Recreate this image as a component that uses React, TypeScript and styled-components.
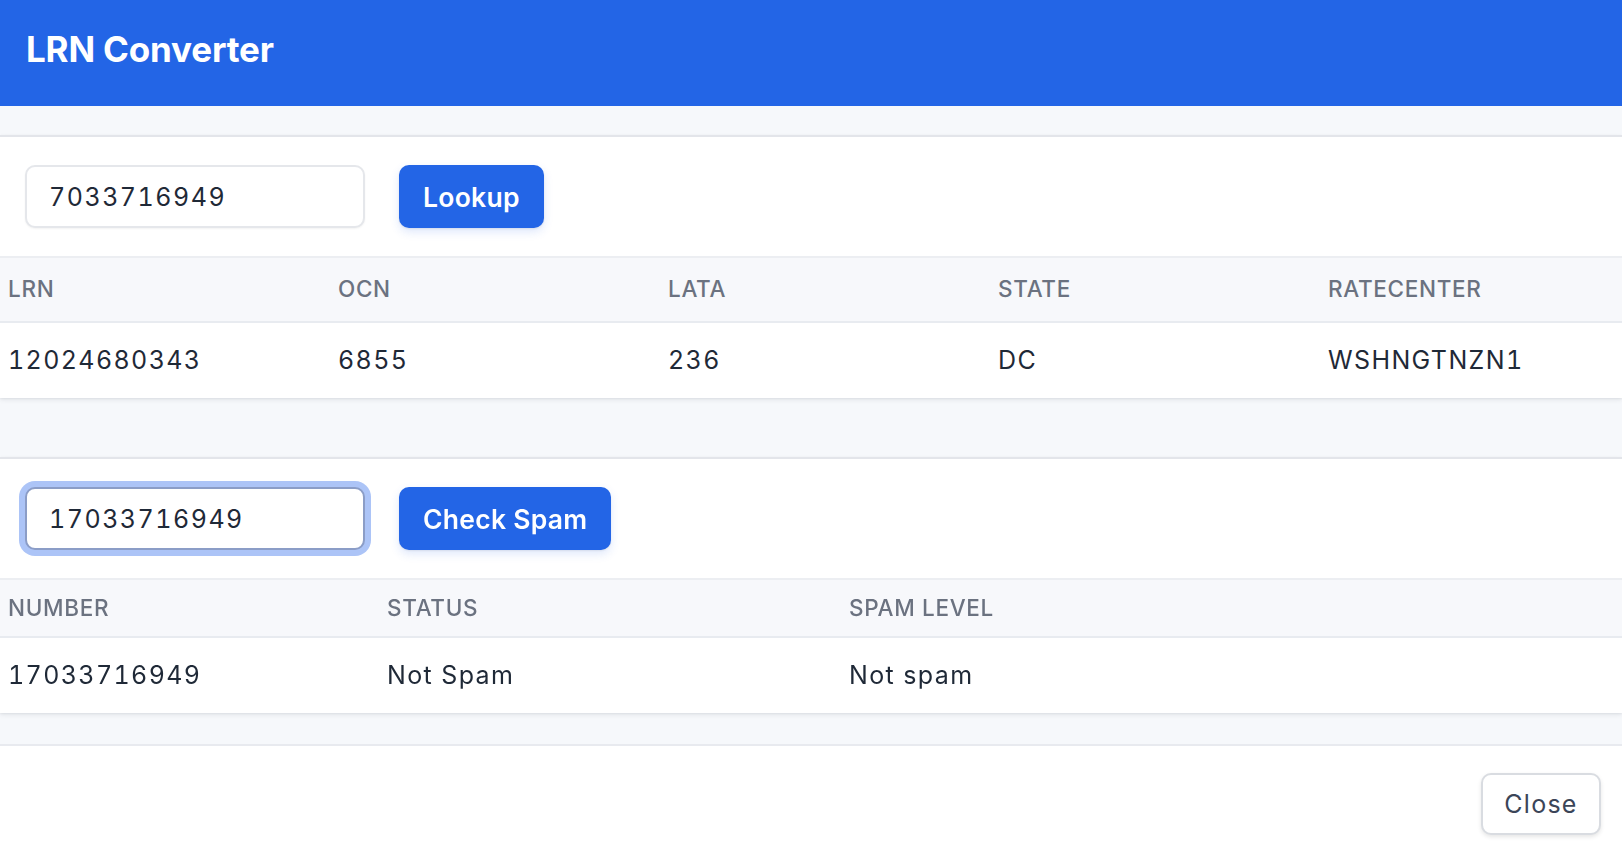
import React, { useEffect, useRef } from 'react';
import styled, { createGlobalStyle } from 'styled-components';

const GlobalStyle = createGlobalStyle`
  html, body {
    margin: 0;
    padding: 0;
    background: #ffffff;
  }

  body {
    font-family: Inter, "Noto Sans", "Liberation Sans", sans-serif;
    color: #1f2937;
    -webkit-font-smoothing: antialiased;
  }

  * {
    box-sizing: border-box;
  }
`;

interface ColumnProps {
  width: number;
}

interface HeadCellProps {
  compact?: boolean;
}

interface FieldProps {
  active?: boolean;
}

const Modal = styled.div`
  display: flex;
  flex-direction: column;
  width: 100%;
  height: 853px;
  overflow: hidden;
  background-color: #ffffff;
`;

const Header = styled.header`
  display: flex;
  align-items: center;
  height: 106px;
  padding: 0 26px 8px;
  background-color: #2365e6;
`;

const Title = styled.h1`
  margin: 0;
  font-size: 35px;
  font-weight: 700;
  color: #ffffff;
  letter-spacing: -0.005em;
`;

const Body = styled.div`
  display: flex;
  flex-direction: column;
  padding: 29px 0 31px;
  background-color: #f6f8fb;
`;

const Card = styled.section<{ spaced?: boolean }>`
  overflow: hidden;
  background-color: #ffffff;
  border-top: 2px solid #e3e5ea;
  box-shadow: 0 2px 5px rgba(17, 24, 39, 0.07), 0 1px 2px rgba(17, 24, 39, 0.06);
  margin-bottom: ${({ spaced }) => (spaced ? '59px' : '0')};
`;

const ControlRow = styled.div`
  display: flex;
  align-items: center;
  gap: 34px;
  padding: 28px 25px 28px;
`;

const Field = styled.input<FieldProps>`
  width: 340px;
  height: 63px;
  padding: 0 22px;
  font-family: inherit;
  font-size: 25px;
  font-variant-numeric: tabular-nums;
  letter-spacing: 0.06em;
  color: #1f2937;
  background-color: #ffffff;
  border: 2px solid ${({ active }) => (active ? '#8b9dc7' : '#e5e7eb')};
  border-radius: 10px;
  outline: none;
  box-shadow: ${({ active }) =>
    active ? '0 0 0 6px rgba(37, 99, 235, 0.38)' : '0 1px 2px rgba(0, 0, 0, 0.05)'};
  caret-color: #111827;
`;

const PrimaryButton = styled.button`
  height: 63px;
  padding: 0 24px;
  font-family: inherit;
  font-size: 26.5px;
  font-weight: 600;
  letter-spacing: 0.01em;
  color: #ffffff;
  background-color: #2365e6;
  border: none;
  border-radius: 10px;
  box-shadow: 0 4px 10px rgba(37, 99, 235, 0.15), 0 1px 2px rgba(0, 0, 0, 0.08);
  cursor: pointer;
`;

const Table = styled.table<{ width: number }>`
  width: ${({ width }) => width}px;
  table-layout: fixed;
  border-collapse: collapse;
`;

const Column = styled.col<ColumnProps>`
  width: ${({ width }) => width}px;
`;

const HeadRow = styled.tr`
  background-color: #f7f8fb;
  border-top: 2px solid #eceef2;
  border-bottom: 2px solid #e8ebf0;
`;

const HeadCell = styled.th<HeadCellProps>`
  padding: ${({ compact }) => (compact ? '11px 8px' : '14px 8px 15px')};
  font-size: 22.5px;
  font-weight: 500;
  line-height: 34px;
  letter-spacing: 0.03em;
  text-align: left;
  text-transform: uppercase;
  color: #6b7280;
`;

const DataCell = styled.td`
  padding: 19px 8px 19px;
  font-size: 25px;
  font-weight: 400;
  font-variant-numeric: tabular-nums;
  line-height: 37px;
  letter-spacing: 0.055em;
  color: #1f2937;
`;

const Footer = styled.footer`
  display: flex;
  justify-content: flex-end;
  flex: 1;
  padding: 27px 21px 0;
  border-top: 2px solid #e8eaef;
  background-color: #ffffff;
`;

const SecondaryButton = styled.button`
  width: 120px;
  height: 62px;
  font-family: inherit;
  font-size: 25px;
  font-weight: 400;
  letter-spacing: 0.05em;
  color: #3b4558;
  background-color: #ffffff;
  border: 2px solid #d9dce1;
  border-radius: 10px;
  box-shadow: 0 2px 4px rgba(0, 0, 0, 0.1);
  cursor: pointer;
`;

const lookupColumns = ['LRN', 'OCN', 'LATA', 'STATE', 'RATECENTER'];
const lookupRow = ['12024680343', '6855', '236', 'DC', 'WSHNGTNZN1'];

const spamColumns = [
  { label: 'NUMBER', width: 379 },
  { label: 'STATUS', width: 462 },
  { label: 'SPAM LEVEL', width: 781 },
];
const spamRow = ['17033716949', 'Not Spam', 'Not spam'];

export default function App() {
  const spamInput = useRef<HTMLInputElement>(null);

  useEffect(() => {
    const el = spamInput.current;
    if (el) {
      el.focus();
      el.setSelectionRange(1, 1);
    }
  }, []);

  return (
    <>
      <GlobalStyle />
      <Modal>
        <Header>
          <Title>LRN Converter</Title>
        </Header>

        <Body>
          <Card spaced>
            <ControlRow>
              <Field defaultValue="7033716949" />
              <PrimaryButton>Lookup</PrimaryButton>
            </ControlRow>
            <Table width={1650}>
              <colgroup>
                {lookupColumns.map((c) => (
                  <Column key={c} width={330} />
                ))}
              </colgroup>
              <thead>
                <HeadRow>
                  {lookupColumns.map((c) => (
                    <HeadCell key={c}>{c}</HeadCell>
                  ))}
                </HeadRow>
              </thead>
              <tbody>
                <tr>
                  {lookupRow.map((v, i) => (
                    <DataCell key={i}>{v}</DataCell>
                  ))}
                </tr>
              </tbody>
            </Table>
          </Card>

          <Card>
            <ControlRow>
              <Field ref={spamInput} active defaultValue="17033716949" />
              <PrimaryButton>Check Spam</PrimaryButton>
            </ControlRow>
            <Table width={1622}>
              <colgroup>
                {spamColumns.map((c) => (
                  <Column key={c.label} width={c.width} />
                ))}
              </colgroup>
              <thead>
                <HeadRow>
                  {spamColumns.map((c) => (
                    <HeadCell key={c.label} compact>
                      {c.label}
                    </HeadCell>
                  ))}
                </HeadRow>
              </thead>
              <tbody>
                <tr>
                  {spamRow.map((v, i) => (
                    <DataCell key={i}>{v}</DataCell>
                  ))}
                </tr>
              </tbody>
            </Table>
          </Card>
        </Body>

        <Footer>
          <SecondaryButton>Close</SecondaryButton>
        </Footer>
      </Modal>
    </>
  );
}
